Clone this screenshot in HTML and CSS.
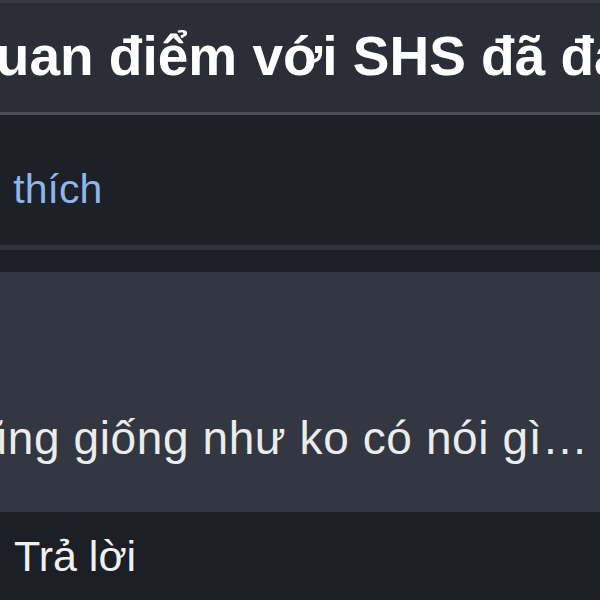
FILE: index.html
```html
<!DOCTYPE html>
<html lang="vi">
<head>
    <meta charset="UTF-8">
    <meta name="viewport" content="width=device-width, initial-scale=1.0">
    <title>Quan điểm với SHS</title>
    <link rel="stylesheet" href="styles.css">
</head>
<body>
    <div class="page">
        <!-- Thread header -->
        <header class="thread-head">
            <h1 class="thread-title">Quan điểm với SHS đã đàm phán lại</h1>
        </header>

        <!-- Post actions -->
        <div class="post-actions">
            <a href="#" class="like-link">Yêu thích</a>
        </div>

        <!-- Comment -->
        <div class="comment">
            <p class="comment-text">cũng giống như ko có nói gì…</p>
        </div>
        <div class="comment-footer">
            <a href="#" class="reply-link">Trả lời</a>
        </div>
    </div>
</body>
</html>
```

FILE: styles.css
```css
* {
    margin: 0;
    padding: 0;
    box-sizing: border-box;
}
body {
    font-family: "Liberation Sans", Arial, sans-serif;
    background-color: #1c1f26;
    color: white;
    overflow: hidden;
}
.page {
    width: 600px;
    height: 600px;
    overflow: hidden;
    white-space: nowrap;
}
/* Thread header */
.thread-head {
    background: #2b2e37;
    border-top: 3px solid #363a43;
    border-bottom: 3px solid #4b4f57;
    padding: 22px 0 25px;
}
.thread-title {
    font-size: 55px;
    line-height: 62px;
    font-weight: bold;
    color: #fff;
    margin-left: -47px;
}
/* Actions row */
.post-actions {
    background: #1d2027;
    padding: 50px 0 32px;
    border-bottom: 5px solid #2e323a;
    margin-bottom: 22px;
}
.like-link {
    display: block;
    font-size: 41px;
    line-height: 48px;
    color: #8db6ea;
    text-decoration: none;
    margin-left: -71px;
}
/* Comment */
.comment {
    background: #323741;
    padding: 141px 0 48px;
}
.comment-text {
    font-size: 46px;
    line-height: 51px;
    letter-spacing: 0.6px;
    color: #ececec;
    margin-left: -42px;
}
.comment-footer {
    background: #1c1f26;
    padding: 20px 14px;
}
.reply-link {
    font-size: 43px;
    line-height: 48px;
    color: #f0f0f0;
    text-decoration: none;
}
```
